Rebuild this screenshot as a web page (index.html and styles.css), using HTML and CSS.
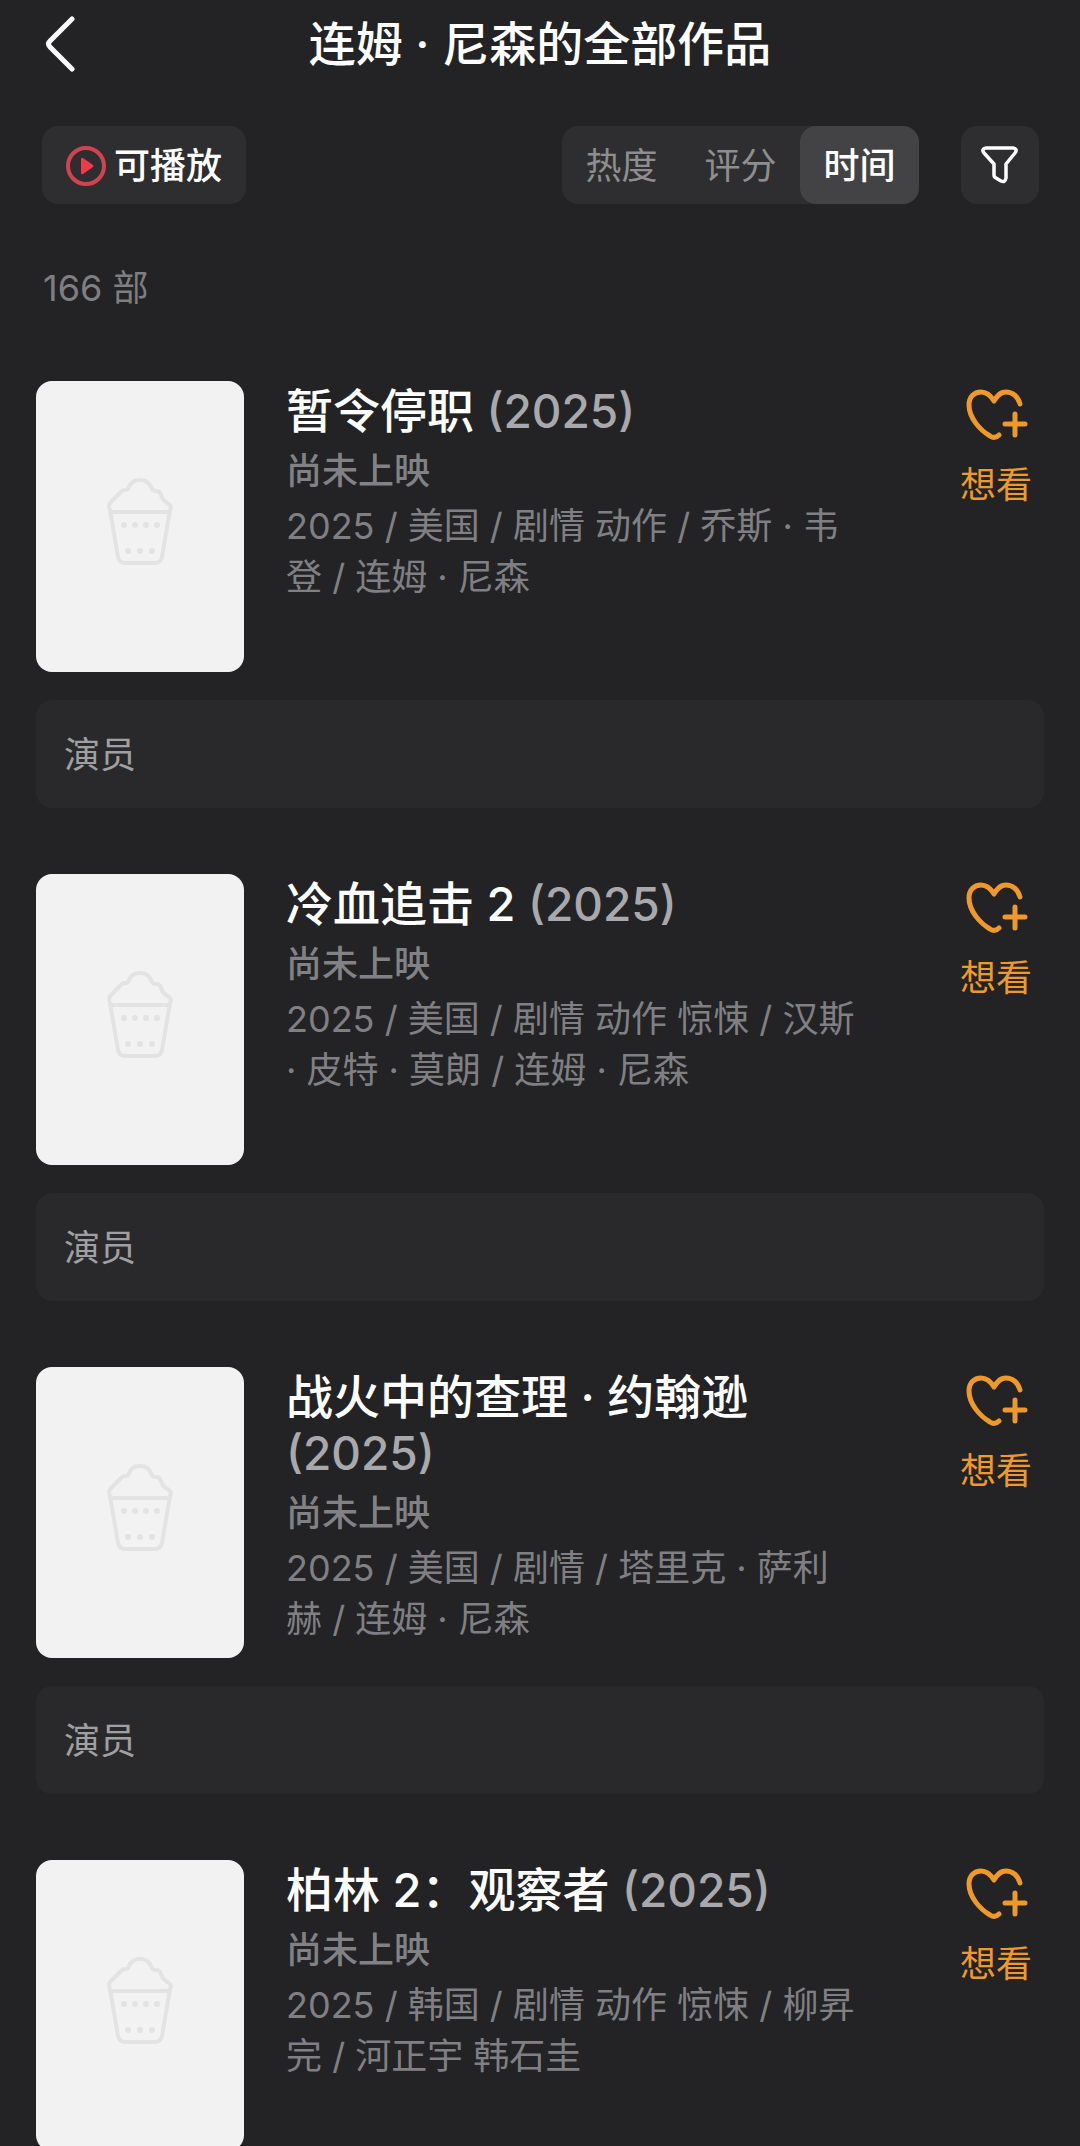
FILE: index.html
```html
<!DOCTYPE html>
<html lang="zh-CN">
<head>
<meta charset="utf-8">
<meta name="viewport" content="width=device-width, initial-scale=1">
<title>连姆 · 尼森的全部作品</title>
<link rel="stylesheet" href="styles.css">
</head>
<body>
<svg class="sprite" aria-hidden="true">
  <symbol id="popcorn" viewBox="0 0 68 90">
    <g fill="none" stroke="currentColor" stroke-width="4" stroke-linejoin="round" stroke-linecap="round">
      <path d="M4 33C2 29 3 27 6 24L14 16Q16 13 20 13C22 13 22 12 23 10C25 5 28 3 34 3C40 3 43 5 45 10C46 13 47 14 50 14Q54 14 55 18C56 22 57 23 60 25C65 28 66 30 64 33"/>
      <path d="M4 35H64M4 33L12 80C13 84 15 86 19 86H49C53 86 55 84 56 80L64 33"/>
    </g>
    <g fill="currentColor">
      <circle cx="18" cy="48" r="3"/><circle cx="29" cy="48" r="3"/><circle cx="40" cy="48" r="3"/><circle cx="51" cy="48" r="3"/>
      <circle cx="22" cy="74" r="3"/><circle cx="34" cy="74" r="3"/><circle cx="46" cy="74" r="3"/>
    </g>
  </symbol>
  <symbol id="wish" viewBox="0 0 64 52">
    <path d="M56 15C54 7 48 3 42 3C36 3 33 7 30 12C27 7 23 3 17 3C10 3 5 8 5 16C5 29 16 41 26 47C29 49 32 49 35 46M51 25V46M41 35H61" fill="none" stroke="currentColor" stroke-width="5" stroke-linecap="round" stroke-linejoin="round"/>
  </symbol>
</svg>

<div class="screen">
  <header class="header">
    <button class="back" type="button" aria-label="返回">
      <svg width="32" height="56" viewBox="0 0 32 56"><path d="M28 3L6 25Q3 28 6 31L28 53" fill="none" stroke="currentColor" stroke-width="5" stroke-linecap="round" stroke-linejoin="round"/></svg>
    </button>
    <h1 class="heading">连姆 · 尼森的全部作品</h1>
  </header>

  <div class="toolbar">
    <button class="chip playable" type="button">
      <svg width="40" height="40" viewBox="0 0 40 40"><circle cx="20" cy="20" r="18" fill="none" stroke="#cf4353" stroke-width="4"/><path d="M15 13V27Q15 29 17 28L27 21Q28 20 27 19L17 12Q15 11 15 13Z" fill="#f03a4c"/></svg>
      可播放
    </button>
    <div class="sort" role="group" aria-label="排序">
      <button class="sort-item" type="button">热度</button>
      <button class="sort-item" type="button">评分</button>
      <button class="sort-item active" type="button" aria-pressed="true">时间</button>
    </div>
    <button class="chip filter" type="button" aria-label="筛选">
      <svg width="40" height="40" viewBox="0 0 40 40"><path d="M6 3H33Q38 4 35 8L26 19V33Q25 38 21 36L16 33Q14 32 14 30V19L4 8Q1 4 6 3Z" fill="none" stroke="currentColor" stroke-width="3.5" stroke-linejoin="round"/></svg>
    </button>
  </div>

  <p class="count">166 部</p>

  <main class="list">
    <article class="work">
      <div class="summary">
        <div class="poster"><svg><use href="#popcorn"/></svg></div>
        <div class="info">
          <h2 class="title">暂令停职 <span class="year">(2025)</span></h2>
          <p class="status">尚未上映</p>
          <p class="meta">2025 / 美国 / 剧情 动作 / 乔斯 · 韦登 / 连姆 · 尼森</p>
        </div>
        <button class="wish" type="button"><svg><use href="#wish"/></svg>想看</button>
      </div>
      <p class="role">演员</p>
    </article>

    <article class="work">
      <div class="summary">
        <div class="poster"><svg><use href="#popcorn"/></svg></div>
        <div class="info">
          <h2 class="title">冷血追击 2 <span class="year">(2025)</span></h2>
          <p class="status">尚未上映</p>
          <p class="meta">2025 / 美国 / 剧情 动作 惊悚 / 汉斯 · 皮特 · 莫朗 / 连姆 · 尼森</p>
        </div>
        <button class="wish" type="button"><svg><use href="#wish"/></svg>想看</button>
      </div>
      <p class="role">演员</p>
    </article>

    <article class="work">
      <div class="summary">
        <div class="poster"><svg><use href="#popcorn"/></svg></div>
        <div class="info">
          <h2 class="title">战火中的查理 · 约翰逊 <span class="year">(2025)</span></h2>
          <p class="status">尚未上映</p>
          <p class="meta">2025 / 美国 / 剧情 / 塔里克 · 萨利赫 / 连姆 · 尼森</p>
        </div>
        <button class="wish" type="button"><svg><use href="#wish"/></svg>想看</button>
      </div>
      <p class="role">演员</p>
    </article>

    <article class="work">
      <div class="summary">
        <div class="poster"><svg><use href="#popcorn"/></svg></div>
        <div class="info">
          <h2 class="title">柏林 2：观察者 <span class="year">(2025)</span></h2>
          <p class="status">尚未上映</p>
          <p class="meta">2025 / 韩国 / 剧情 动作 惊悚 / 柳昇完 / 河正宇 韩石圭</p>
        </div>
        <button class="wish" type="button"><svg><use href="#wish"/></svg>想看</button>
      </div>
    </article>
  </main>
</div>
</body>
</html>
```
FILE: styles.css
```css
* {
  box-sizing: border-box;
  margin: 0;
  padding: 0;
}

body {
  background: #232325;
  color: #fff;
  font-family: Inter, "Noto Sans CJK SC", sans-serif;
  font-size: 36px;
  line-height: 51px;
}

button {
  border: 0;
  background: none;
  color: inherit;
  font: inherit;
}

svg {
  display: block;
}

.sprite {
  display: none;
}

.screen {
  display: flex;
  flex-direction: column;
  height: 100vh;
}

.header {
  display: grid;
  grid-template-columns: 72px 1fr 72px;
  align-items: center;
  height: 88px;
  padding: 0 44px;
}

.heading {
  font-size: 47px;
  font-weight: 500;
  line-height: 56px;
  text-align: center;
}

.toolbar {
  display: flex;
  gap: 42px;
  padding: 38px 41px 0 42px;
}

.chip {
  display: flex;
  align-items: center;
  justify-content: center;
  height: 78px;
  border-radius: 16px;
  background: #2e2e30;
}

.playable {
  gap: 8px;
  margin-right: auto;
  padding: 2px 24px 0;
  font-weight: 500;
}

.filter {
  width: 78px;
}

.sort {
  display: flex;
  border-radius: 16px;
  background: #2e2e30;
}

.sort-item {
  width: 119px;
  padding-top: 2px;
  border-radius: 16px;
  color: #8e8e90;
}

.sort-item.active {
  background: #434345;
  color: #fff;
  font-weight: 500;
}

.count {
  padding: 59px 43px 0;
  color: #7f7f82;
}

.list {
  flex: 1;
  display: flex;
  flex-direction: column;
  gap: 66px;
  min-height: 0;
  padding: 67px 36px 0;
  overflow-y: auto;
  scrollbar-width: none;
}

.work {
  flex: none;
}

.summary {
  display: flex;
  align-items: flex-start;
}

.poster {
  flex: none;
  display: flex;
  align-items: center;
  justify-content: center;
  width: 208px;
  height: 291px;
  padding-bottom: 10px;
  border-radius: 16px;
  background: #f2f2f2;
  color: #e3e3e3;
}

.poster svg {
  width: 68px;
  height: 90px;
}

.info {
  flex: 1;
  padding: 2px 104px 0 42px;
}

.title {
  font-size: 47px;
  font-weight: 500;
  line-height: 56px;
}

.year {
  color: #a9a9ad;
  font-size: 46px;
}

.status {
  margin-top: 7px;
  color: #828286;
  font-weight: 500;
}

.meta {
  margin-top: 4px;
  color: #808084;
}

.wish {
  display: flex;
  flex-direction: column;
  align-items: center;
  gap: 19px;
  padding: 8px 12px 0 0;
  color: #ee992a;
}

.wish svg {
  width: 64px;
  height: 52px;
}

.role {
  margin-top: 28px;
  padding: 30px 28px 27px;
  border-radius: 16px;
  background: #29292b;
  color: #a0a0a3;
}
```
